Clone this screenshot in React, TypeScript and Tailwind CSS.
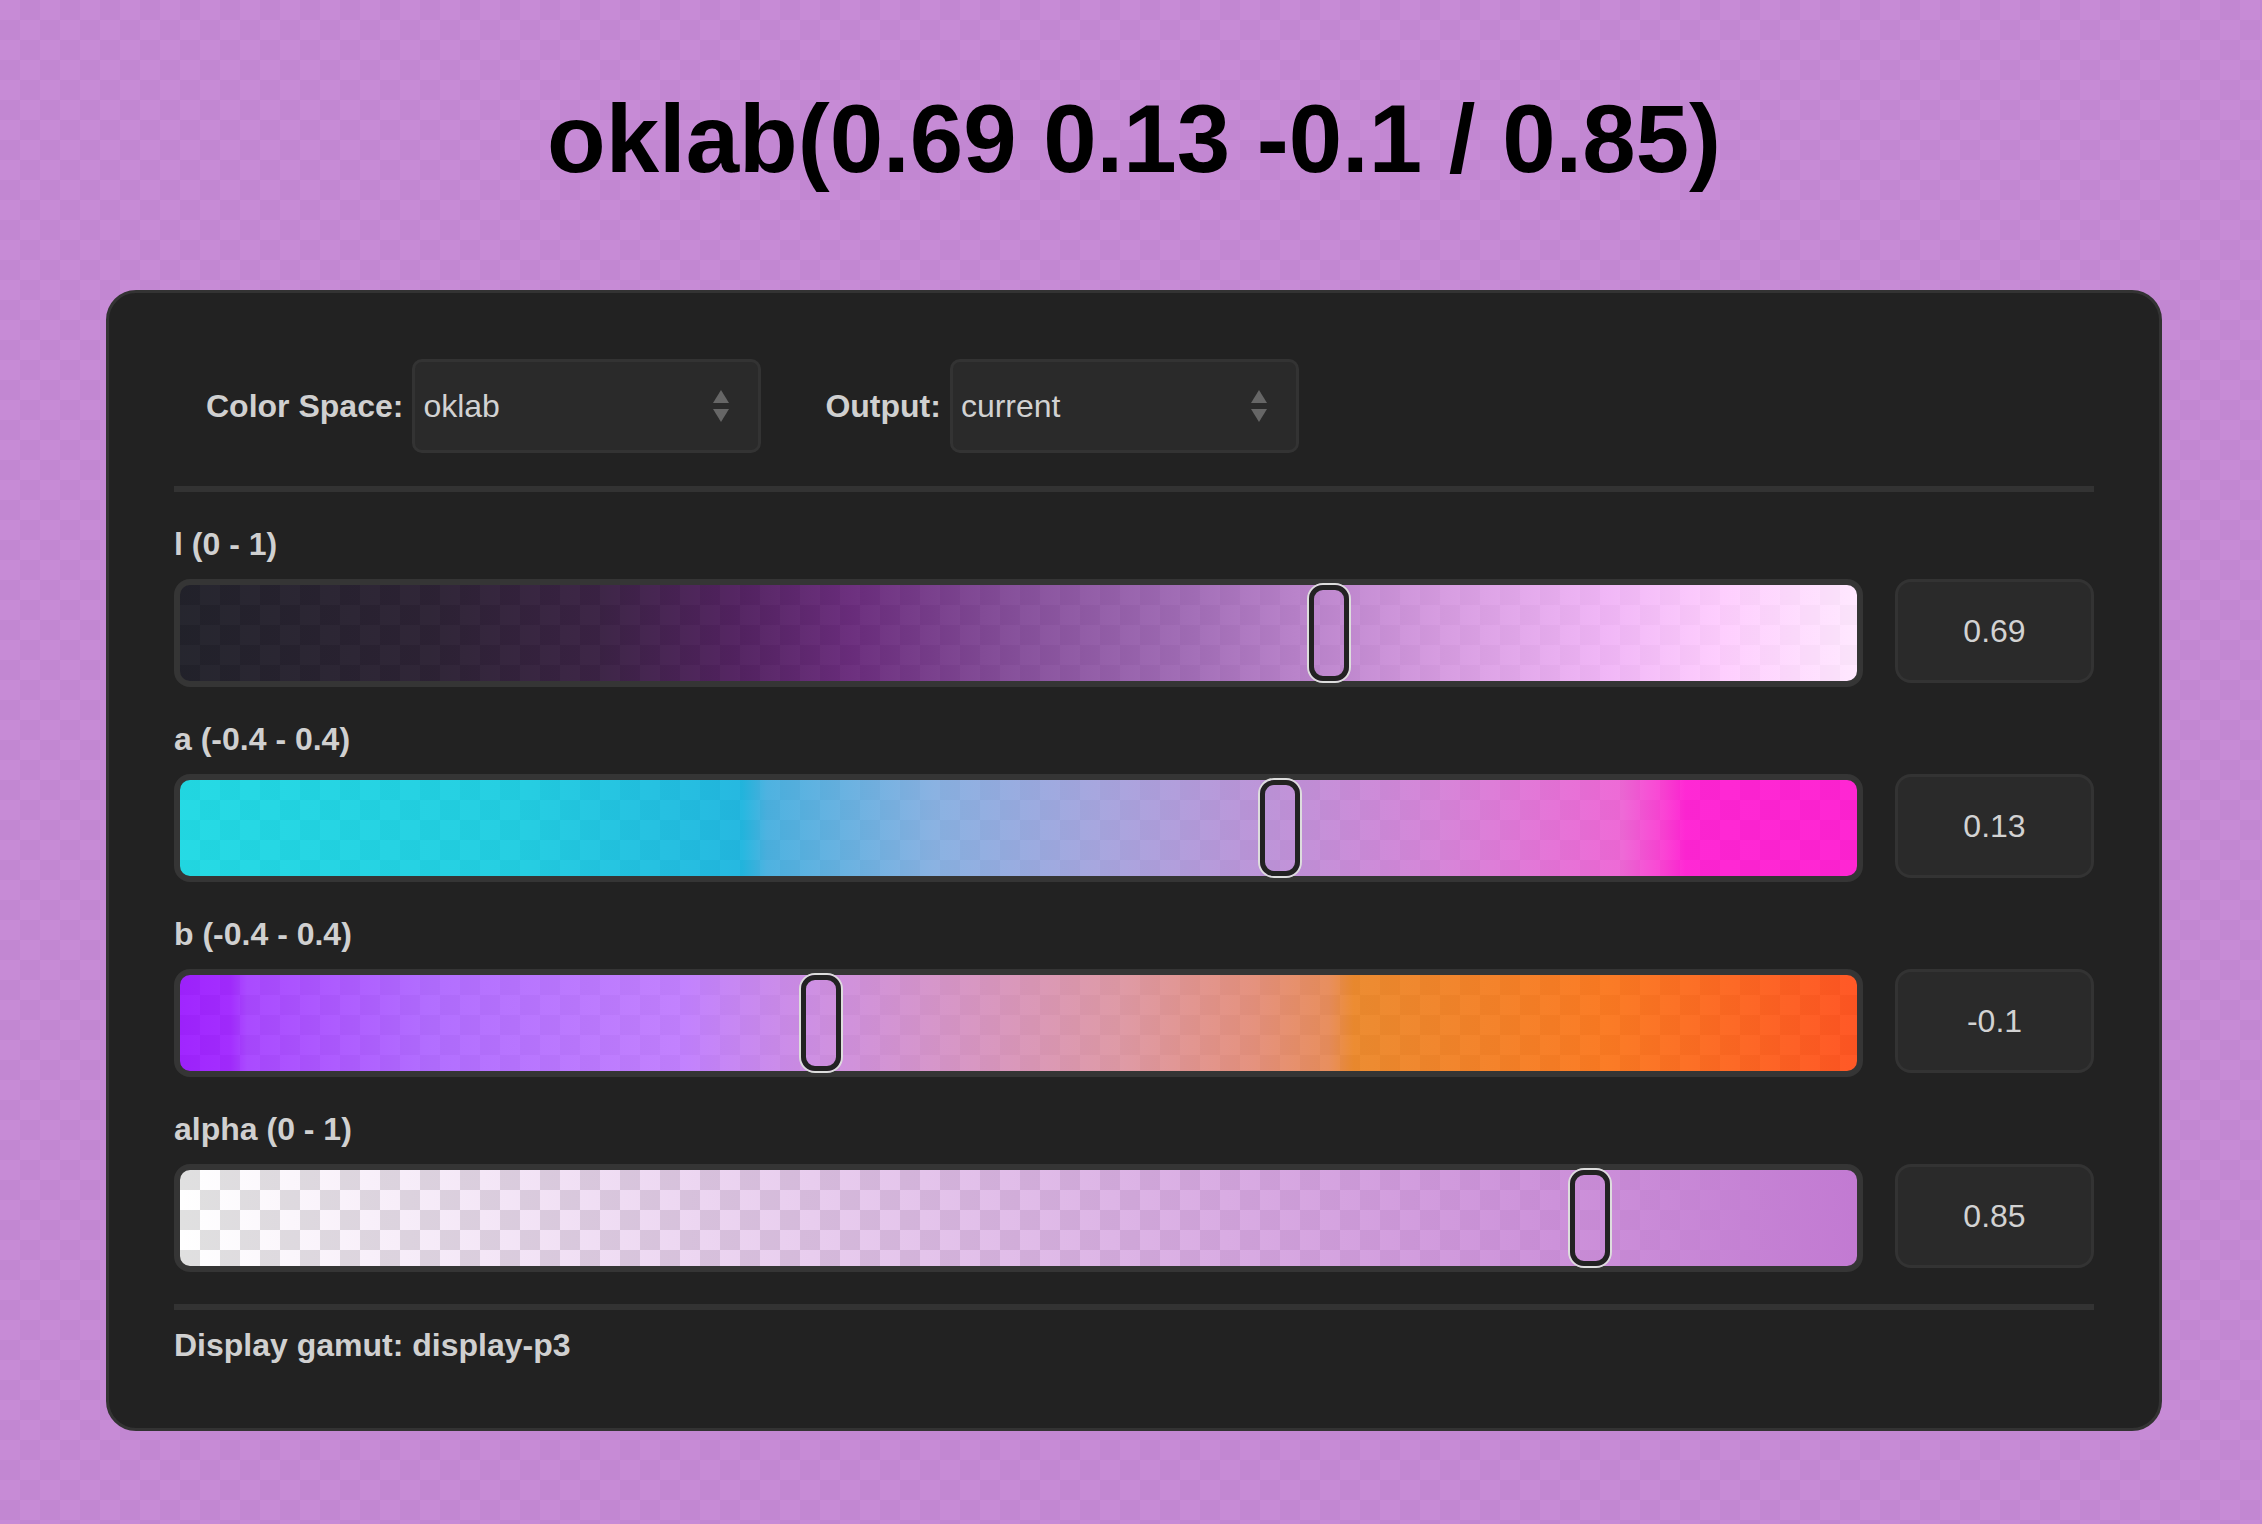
import React from "react";

type Stop = [number, string];

// squares under each track: white / light grey, 20px
const CHECKER = "repeating-conic-gradient(#ffffff 0% 25%, #e0e0e0 0% 50%) 0 0 / 40px 40px";
const CHECKER_AVG = 239;
const ALPHA = 0.85;

// the picker paints every track at the current alpha over the checker,
// so back out the opaque colour from the colour we want to end up with
function unblend(hex: string) {
  const n = parseInt(hex.slice(1), 16);
  const ch = [(n >> 16) & 255, (n >> 8) & 255, n & 255].map((c) =>
    Math.max(0, Math.min(255, Math.round((c - (1 - ALPHA) * CHECKER_AVG) / ALPHA)))
  );
  return `rgba(${ch[0]}, ${ch[1]}, ${ch[2]}, ${ALPHA})`;
}

function trackBg(stops: Stop[]) {
  const g = stops.map(([p, c]) => `${unblend(c)} ${p}%`).join(", ");
  return `linear-gradient(to right, ${g}), ${CHECKER}`;
}

const CHANNELS = [
  {
    label: "l (0 - 1)",
    value: "0.69",
    pos: 0.69,
    bg: trackBg([
      [0, "#24222c"],
      [15, "#2e2236"],
      [25, "#3c2045"],
      [33, "#532060"],
      [40, "#6a2e7c"],
      [50, "#86509a"],
      [60, "#a06cb4"],
      [68, "#bc86cc"],
      [75, "#d49ade"],
      [85, "#eeb4f4"],
      [92, "#fcccfc"],
      [100, "#ffe6ff"],
    ]),
  },
  {
    label: "a (-0.4 - 0.4)",
    value: "0.13",
    pos: 0.66,
    bg: trackBg([
      [0, "#24d8e2"],
      [20, "#22cce0"],
      [33.5, "#1ab6de"],
      [35, "#4cb0de"],
      [45, "#88b0e0"],
      [55, "#a6a4dc"],
      [65, "#bc92d6"],
      [75, "#d484d6"],
      [86, "#ec68d4"],
      [88.5, "#f842d2"],
      [89.8, "#ff26d2"],
      [100, "#ff1ed0"],
    ]),
  },
  {
    label: "b (-0.4 - 0.4)",
    value: "-0.1",
    pos: 0.379,
    bg: trackBg([
      [0, "#9e1cff"],
      [3, "#a22cff"],
      [4, "#a848ff"],
      [15, "#b06cff"],
      [30, "#c080fc"],
      [38, "#cc8ee0"],
      [45, "#d494c8"],
      [56, "#dc98a4"],
      [64, "#e2907c"],
      [68.5, "#e68c5c"],
      [70, "#ea8a30"],
      [85, "#f87a22"],
      [100, "#ff5620"],
    ]),
  },
  {
    label: "alpha (0 - 1)",
    value: "0.85",
    pos: 0.85,
    bg: `linear-gradient(to right, rgba(194, 122, 210, 0) 0%, rgba(194, 122, 210, 1) 100%), ${CHECKER}`,
  },
];

function SelectBox({ value }: { value: string }) {
  return (
    <div className="flex h-[94px] w-[349px] items-center justify-between rounded-[10px] border-[3px] border-[#333333] bg-[#2a2a2a] pl-[8px] pr-[29px] text-[32px] text-[#d2d2d2]">
      <span>{value}</span>
      <svg width="16" height="32" viewBox="0 0 16 32">
        <path d="M8 0L16 13H0Z" fill="#666666" />
        <path d="M0 19H16L8 32Z" fill="#666666" />
      </svg>
    </div>
  );
}

function Channel({ label, value, pos, bg }: (typeof CHANNELS)[number]) {
  return (
    <div>
      <div className="mb-[15px] text-[32px] font-bold leading-[40px] text-[#d0d0d0]">{label}</div>
      <div className="flex items-start gap-[32px]">
        <div
          className="relative h-[108px] flex-1 rounded-[16px] border-[6px] border-[#353535]"
          style={{ background: bg }}
        >
          <div
            className="absolute top-1/2 h-[100px] w-[44px] -translate-y-1/2 rounded-[16px] border-2 border-[#dddddd]"
            style={{ left: `calc(${pos} * (100% - 44px))` }}
          >
            <div className="h-full w-full rounded-[14px] border-[5px] border-[#222222]" />
          </div>
        </div>
        <div className="flex h-[104px] w-[199px] items-center justify-center rounded-[16px] border-[3px] border-[#333333] bg-[#2a2a2a] text-[32px] text-[#d2d2d2]">
          {value}
        </div>
      </div>
    </div>
  );
}

export default function App() {
  return (
    <div className="min-h-screen w-full bg-[image:repeating-conic-gradient(#c287d2_0%_25%,#c78bd6_0%_50%)] bg-[length:40px_40px] pb-[93px] pl-[106px] pr-[100px] pt-[91px] font-['Liberation_Sans',Arial,sans-serif]">
      <h1 className="text-center text-[96px] font-bold leading-[96px] text-black">
        oklab(0.69 0.13 -0.1 / 0.85)
      </h1>

      <div className="mt-[103px] rounded-[30px] border-[3px] border-[#333333] bg-[#222222] px-[65px] pb-[63px] pt-[66px]">
        {/* pickers */}
        <div className="flex items-center gap-[64px] pl-[32px]">
          <div className="flex items-center gap-[9px]">
            <span className="text-[32px] font-bold text-[#d0d0d0]">Color Space:</span>
            <SelectBox value="oklab" />
          </div>
          <div className="flex items-center gap-[9px]">
            <span className="text-[32px] font-bold text-[#d0d0d0]">Output:</span>
            <SelectBox value="current" />
          </div>
        </div>

        <div className="mb-[32px] mt-[33px] h-[6px] bg-[#333333]" />

        <div className="flex flex-col gap-[32px]">
          {CHANNELS.map((c) => (
            <Channel key={c.label} {...c} />
          ))}
        </div>

        <div className="mb-[15px] mt-[32px] h-[6px] bg-[#333333]" />
        <div className="text-[32px] font-bold leading-[40px] text-[#d0d0d0]">Display gamut: display-p3</div>
      </div>
    </div>
  );
}
